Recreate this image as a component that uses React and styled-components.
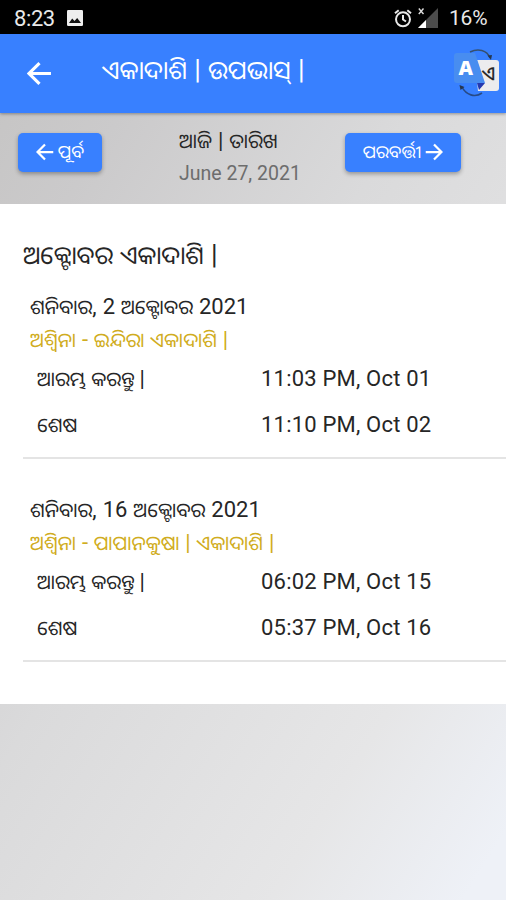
import React from "react";
import styled, { createGlobalStyle } from "styled-components";

const Global = createGlobalStyle`
  *, *::before, *::after { box-sizing: border-box; }
  body { margin: 0; font-family: Roboto, "Noto Sans Oriya", "Noto Sans", sans-serif; color: #262626; }
`;

const Screen = styled.div`
  width: 506px;
  height: 900px;
  overflow: hidden;
  display: flex;
  flex-direction: column;
  background: linear-gradient(122deg, #c4c3c2 0%, #cbcacb 18%, #dadadb 45%, #e6e6e7 78%, #eef1f7 96%);
`;

const StatusBar = styled.div`
  flex: none;
  height: 34px;
  background: #000;
  color: #e9e9e9;
  display: flex;
  align-items: center;
  padding: 2px 18px 0 14px;
  font-size: 22px;
`;

const Clock = styled.span`
  width: 53px;
  letter-spacing: -0.4px;
`;

const StatusIcons = styled.div`
  margin-left: auto;
  display: flex;
  align-items: center;
  gap: 6px;
`;

const Battery = styled.span`
  width: 39px;
  margin-left: 5px;
  font-size: 21px;
  letter-spacing: -0.2px;
  white-space: nowrap;
`;

const Header = styled.header`
  flex: none;
  height: 79px;
  background: #3880ff;
  color: #fff;
  display: flex;
  align-items: center;
  padding: 0 6px 0 27px;
  box-shadow: 0 1px 3px rgba(0, 0, 0, 0.35);
  z-index: 1;
`;

const Line = styled.span`
  display: block;
  white-space: nowrap;
  font-size: ${(p) => p.$size}px;
  line-height: ${(p) => p.$line}px;
  height: ${(p) => p.$line}px;
  letter-spacing: ${(p) => p.$track || 0}px;
  word-spacing: ${(p) => p.$gap || 0}px;
  color: ${(p) => p.$color || "inherit"};
`;

const Latin = styled.span`
  font-size: ${(p) => p.$size}px;
  line-height: 1;
`;

/* Odia runs use the base size; digits and bars are set slightly larger. */
const Mixed = ({ latin, children, ...rest }) => (
  <Line {...rest}>
    {children.split(/([\x21-\x7e]+)/).map((part, i) =>
      i % 2 ? <Latin key={i} $size={latin}>{part}</Latin> : part
    )}
  </Line>
);

const TitleBox = styled.div`
  margin-left: 50px;
  margin-top: -7px;
`;

const Language = styled.div`
  margin-left: auto;
  display: flex;
`;

const DateBar = styled.section`
  flex: none;
  height: 91px;
  display: flex;
  align-items: flex-start;
  padding: 20px 45px 0 18px;
`;

const NavButton = styled.button`
  width: ${(p) => p.$width}px;
  height: 39px;
  border: 0;
  border-radius: 5px;
  background: #3880ff;
  color: #fff;
  font-family: inherit;
  padding: 0 0 1px;
  display: flex;
  align-items: center;
  justify-content: center;
  gap: 4px;
  box-shadow: 0 2px 4px rgba(0, 0, 0, 0.32);
`;

const Today = styled.div`
  width: 166px;
  margin: -8px 0 0 77px;
`;

const Sheet = styled.main`
  flex: none;
  height: 500px;
  background: #fff;
  padding: 32px 0 0 23px;
`;

const Entry = styled.article`
  height: ${(p) => p.$height}px;
  border-bottom: 2px solid #e4e4e4;
  padding: ${(p) => p.$top}px 0 0 7px;
`;

const TimeRow = styled.div`
  display: grid;
  grid-template-columns: 224px 1fr;
  align-items: center;
  height: 46.5px;
  padding-left: 7px;
`;

const Time = styled(Line)`
  margin-top: -2px;
`;

const Arrow = ({ size, right, weight = 3 }) => (
  <svg width={size} height={size} viewBox="0 0 24 24" fill="none" stroke="#fff" strokeWidth={weight}>
    <path d={right ? "M1 12H22M12 2L22 12L12 22" : "M23 12H2M12 2L2 12L12 22"} />
  </svg>
);

const PhotoIcon = () => (
  <svg width="16" height="16" viewBox="0 0 16 16">
    <rect width="16" height="16" rx="1.2" fill="#eee" />
    <path d="M2 13L5.2 8.6L7.5 11L10.2 8L14 13Z" fill="#111" />
  </svg>
);

const AlarmIcon = () => (
  <svg width="18" height="19" viewBox="0 0 18 19" fill="none" stroke="#e9e9e9" strokeWidth="2">
    <circle cx="9" cy="10.3" r="7" />
    <path d="M9 6V10.5L12 12.5M1 4.3L4.7 1.2M17 4.3L13.3 1.2" />
  </svg>
);

const SignalIcon = () => (
  <svg width="20" height="20" viewBox="0 0 20 20">
    <path d="M20 0V20H0Z" fill="#4c4c4c" />
    <path d="M8 12V20H0Z" fill="#fff" />
    <path d="M0.8 0.5L5.5 6M5.5 0.5L0.8 6" stroke="#ddd" strokeWidth="1.4" />
  </svg>
);

const TranslateIcon = () => (
  <svg width="48" height="50" viewBox="0 0 48 50">
    <path d="M18 3C26 -1 35 1 38 9" fill="none" stroke="#36506f" strokeWidth="1.4" />
    <path d="M35.5 6.5L40 6L39 11Z" fill="#26364f" />
    <path d="M10 38C14 46 23 49 30 44" fill="none" stroke="#274a86" strokeWidth="1.6" />
    <path d="M7.5 36L12.5 38L8.5 41Z" fill="#26364f" />
    <path d="M23 11H44Q47 11 47 14V39Q47 42 44 42H26Z" fill="#ececee" />
    <text x="30" y="31" fill="#222" stroke="#222" strokeWidth=".3" fontSize="19" fontFamily="Noto Sans Oriya, sans-serif">ଏ</text>
    <path d="M25 34L33 34L27 41Z" fill="#2438b0" />
    <path d="M5 4H23L33 34H5Q2 34 2 31V7Q2 4 5 4Z" fill="#488df0" />
    <text x="6.5" y="25.5" fill="#fff" fontSize="20" fontWeight="800" fontFamily="Open Sans, sans-serif">A</text>
  </svg>
);

const entries = [
  {
    height: 183, top: 15,
    date: "ଶନିବାର, 2 ଅକ୍ଟୋବର 2021",
    name: "ଅଶ୍ୱିନା - ଇନ୍ଦିରା ଏକାଦାଶି |",
    start: "11:03 PM, Oct 01",
    end: "11:10 PM, Oct 02",
  },
  {
    height: 203, top: 35,
    date: "ଶନିବାର, 16 ଅକ୍ଟୋବର 2021",
    name: "ଅଶ୍ୱିନା - ପାପାନକୁଷା | ଏକାଦାଶି |",
    start: "06:02 PM, Oct 15",
    end: "05:37 PM, Oct 16",
  },
];

export default function App() {
  return (
    <Screen>
      <Global />
      <StatusBar>
        <Clock>8:23</Clock>
        <PhotoIcon />
        <StatusIcons>
          <AlarmIcon />
          <SignalIcon />
          <Battery>16%</Battery>
        </StatusIcons>
      </StatusBar>
      <Header>
        <Arrow size={25} />
        <TitleBox>
          <Mixed $size={25.5} latin={27} $line={40} $gap={0.8}>ଏକାଦାଶି | ଉପଭାସ୍ |</Mixed>
        </TitleBox>
        <Language><TranslateIcon /></Language>
      </Header>
      <DateBar>
        <NavButton $width={84}>
          <Arrow size={18} />
          <Line $size={18} $line={30}>ପୂର୍ବ</Line>
        </NavButton>
        <Today>
          <Mixed $size={20} latin={22} $line={32} $gap={1}>ଆଜି | ତାରିଖ</Mixed>
          <Line $size={19.5} $line={33} $color="#6d6d6d">June 27, 2021</Line>
        </Today>
        <NavButton $width={116}>
          <Line $size={17.5} $line={30}>ପରବର୍ତ୍ତୀ</Line>
          <Arrow size={18} right />
        </NavButton>
      </DateBar>
      <Sheet>
        <Mixed $size={25} latin={27} $line={40} $gap={1}>ଅକ୍ଟୋବର ଏକାଦାଶି |</Mixed>
        {entries.map((e) => (
          <Entry key={e.date} $height={e.height} $top={e.top}>
            <Mixed $size={20} latin={22} $line={33} $gap={1}>{e.date}</Mixed>
            <Mixed $size={20} latin={22} $line={32} $gap={0.8} $color="#d0ac20">{e.name}</Mixed>
            <TimeRow>
              <Mixed $size={20} latin={22} $line={33}>ଆରମ୍ଭ କରନ୍ତୁ |</Mixed>
              <Time $size={22} $line={33} $track={0.2}>{e.start}</Time>
            </TimeRow>
            <TimeRow>
              <Line $size={20} $line={33}>ଶେଷ</Line>
              <Time $size={22} $line={33} $track={0.2}>{e.end}</Time>
            </TimeRow>
          </Entry>
        ))}
      </Sheet>
    </Screen>
  );
}
